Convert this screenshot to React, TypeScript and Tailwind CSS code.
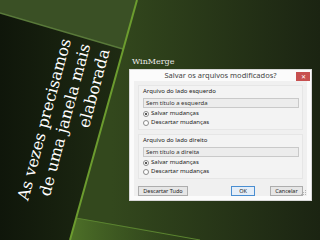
import React from "react";

const SLIDE_FONT = { fontFamily: '"DejaVu Serif", serif' };
const UI_FONT = { fontFamily: '"Noto Sans", "Open Sans", sans-serif' };

function SlideBackground() {
  return (
    <svg className="absolute inset-0" width="320" height="240" viewBox="0 0 320 240">
      <defs>
        <linearGradient id="base" x1="0" y1="0" x2="1" y2="0">
          <stop offset="0.35" stopColor="#33481d" />
          <stop offset="1" stopColor="#1b2412" />
        </linearGradient>
        <linearGradient id="panel" x1="0" y1="0" x2="1" y2="0">
          <stop offset="0" stopColor="#0f160a" />
          <stop offset="1" stopColor="#1f2b13" />
        </linearGradient>
        <linearGradient id="band" x1="0" y1="0" x2="1" y2="0">
          <stop offset="0" stopColor="#4e7128" />
          <stop offset="1" stopColor="#2b3f19" stopOpacity="0" />
        </linearGradient>
      </defs>
      <rect width="320" height="240" fill="url(#base)" />
      <polygon points="0,0 137,0 123,49 0,13" fill="#3a5025" />
      <polygon points="76,218 210,240 70,240" fill="url(#band)" />
      <line x1="76" y1="218" x2="200" y2="240" stroke="#5b8430" strokeWidth="1" />
      <polygon points="0,13 123,49 70,240 0,240" fill="url(#panel)" />
      <line x1="0" y1="13" x2="123" y2="49" stroke="#59793a" strokeWidth="1.5" />
      <line x1="137" y1="0" x2="70" y2="240" stroke="#6c9c2f" strokeWidth="2" />
    </svg>
  );
}

function Radio({ checked, label }: { checked?: boolean; label: string }) {
  return (
    <div className="flex items-center gap-[2px] h-[9px]">
      <span className="w-[6px] h-[6px] rounded-full border border-[#8a8a8a] bg-white flex items-center justify-center">
        {checked && <span className="w-[2px] h-[2px] rounded-full bg-[#222]" />}
      </span>
      <span className="text-[6px] text-[#222]">{label}</span>
    </div>
  );
}

function FileGroup({ title, file }: { title: string; file: string }) {
  return (
    <div className="border border-[#e6e6e6] bg-[#f3f3f3] pl-[4px] pr-[3px] pt-[1px] pb-[2px]">
      <div className="text-[6px] leading-[9px] text-[#222]">{title}</div>
      <div className="mt-[2px] h-[10px] border border-[#c9c9c9] bg-[#ececec] px-[2px] text-[6px] leading-[8px] text-[#333]">
        {file}
      </div>
      <div className="mt-[1px] flex flex-col">
        <Radio checked label="Salvar mudanças" />
        <Radio label="Descartar mudanças" />
      </div>
    </div>
  );
}

function Dialog() {
  return (
    <div className="w-[183px] h-[132px] bg-[#fbfbfb] border border-[#d8d8d8] flex flex-col" style={UI_FONT}>
      <div className="relative h-[13px] flex items-center justify-center">
        <span className="text-[7.5px] text-[#444]">Salvar os arquivos modificados?</span>
        <span className="absolute right-[1px] top-[2px] w-[14px] h-[9px] bg-[#c75050] flex items-center justify-center text-white text-[6px] leading-none">
          ✕
        </span>
      </div>
      <div className="relative flex-1 mx-[4px] mb-[4px] bg-[#f0f0f0] px-[4px] pt-[4px] flex flex-col">
        <FileGroup title="Arquivo do lado esquerdo" file="Sem título a esquerda" />
        <div className="mt-[4px]">
          <FileGroup title="Arquivo do lado direito" file="Sem título a direita" />
        </div>
        <div className="mt-[7px] flex items-center">
          <button className="w-[50px] h-[10px] border border-[#adadad] bg-[#e6e6e6] text-[5.5px] leading-none text-[#222]">
            Descartar Tudo
          </button>
          <div className="flex-1" />
          <button className="w-[24px] h-[10px] border border-[#4a8ed1] bg-[#e5eef8] text-[5.5px] leading-none text-[#222]">
            OK
          </button>
          <button className="ml-[15px] w-[33px] h-[10px] border border-[#adadad] bg-[#e6e6e6] text-[5.5px] leading-none text-[#222]">
            Cancelar
          </button>
        </div>
        <svg className="absolute right-[1px] bottom-[1px]" width="5" height="5" viewBox="0 0 5 5">
          <rect x="4" y="0" width="1" height="1" fill="#b5b5b5" />
          <rect x="2" y="2" width="1" height="1" fill="#b5b5b5" />
          <rect x="4" y="2" width="1" height="1" fill="#b5b5b5" />
          <rect x="0" y="4" width="1" height="1" fill="#b5b5b5" />
          <rect x="2" y="4" width="1" height="1" fill="#b5b5b5" />
          <rect x="4" y="4" width="1" height="1" fill="#b5b5b5" />
        </svg>
      </div>
    </div>
  );
}

export default function App() {
  return (
    <div className="relative w-[320px] h-[240px] overflow-hidden bg-[#26351a]">
      <SlideBackground />

      <div
        className="absolute left-[-29px] top-[102px] w-[182px] h-[60px] text-right text-white text-[16px] leading-[20px] -rotate-[75deg]"
        style={SLIDE_FONT}
      >
        <div>As vezes precisamos</div>
        <div>de uma janela mais</div>
        <div>elaborada</div>
      </div>

      <div className="relative pl-[129px] pt-[57px]">
        <div className="pl-[3px] text-[8px] leading-[10px] text-[#ececec]" style={SLIDE_FONT}>
          WinMerge
        </div>
        <div className="mt-[2px]">
          <Dialog />
        </div>
      </div>
    </div>
  );
}
